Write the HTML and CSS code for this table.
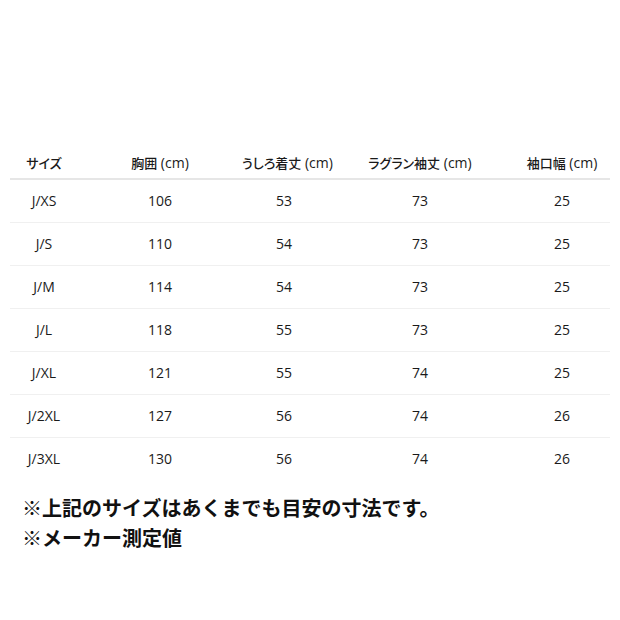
FILE: index.html
```html
<!DOCTYPE html>
<html lang="ja">
<head>
<meta charset="utf-8">
<link rel="stylesheet" href="styles.css">
</head>
<body>
<div class="page">
  <table class="size-table">
    <colgroup>
      <col class="c1"><col class="c2"><col class="c3"><col class="c4"><col class="c5">
    </colgroup>
    <thead>
      <tr>
        <th><span class="ja">サイズ</span></th>
        <th><span class="ja">胸囲</span> (cm)</th>
        <th><span class="ja">うしろ着丈</span> (cm)</th>
        <th><span class="ja">ラグラン袖丈</span> (cm)</th>
        <th><span class="ja">袖口幅</span> (cm)</th>
      </tr>
    </thead>
    <tbody>
      <tr><td>J/XS</td><td>106</td><td>53</td><td>73</td><td>25</td></tr>
      <tr><td>J/S</td><td>110</td><td>54</td><td>73</td><td>25</td></tr>
      <tr><td>J/M</td><td>114</td><td>54</td><td>73</td><td>25</td></tr>
      <tr><td>J/L</td><td>118</td><td>55</td><td>73</td><td>25</td></tr>
      <tr><td>J/XL</td><td>121</td><td>55</td><td>74</td><td>25</td></tr>
      <tr><td>J/2XL</td><td>127</td><td>56</td><td>74</td><td>26</td></tr>
      <tr><td>J/3XL</td><td>130</td><td>56</td><td>74</td><td>26</td></tr>
    </tbody>
  </table>
  <div class="notes">
    <p>※上記のサイズはあくまでも目安の寸法です。</p>
    <p>※メーカー測定値</p>
  </div>
</div>
</body>
</html>
```

FILE: styles.css
```css
html, body {
  margin: 0;
  padding: 0;
  background: #ffffff;
}
.page {
  width: 620px;
  height: 620px;
  padding: 143px 10px 0 10px;
  box-sizing: border-box;
  font-family: "Open Sans", "Noto Sans CJK JP", sans-serif;
  color: #1a1a1a;
}
.size-table {
  width: 600px;
  border-collapse: collapse;
  table-layout: fixed;
  font-size: 14px;
}
.c1 { width: 68px; }
.c2 { width: 164px; }
.c3 { width: 84px; }
.c4 { width: 188px; }
.c5 { width: 96px; }
.size-table th,
.size-table td {
  text-align: center;
  padding: 0;
  white-space: nowrap;
  line-height: 20px;
  font-weight: 500;
}
.size-table th {
  height: 31px;
  padding-top: 4px;
  border-bottom: 2px solid #e6e6e6;
  vertical-align: middle;
}
.ja {
  font-family: "Noto Sans CJK JP", sans-serif;
  font-size: 13px;
  font-feature-settings: "palt";
}
.size-table td {
  height: 42px;
  border-bottom: 1px solid #f0f0f0;
}
.size-table tbody tr:last-child td {
  border-bottom: none;
}
.notes {
  margin-top: 13px;
  padding-left: 12px;
  font-family: "Noto Sans CJK JP", sans-serif;
  font-size: 20px;
  font-weight: bold;
  color: #111111;
}
.notes p {
  margin: 0;
  line-height: 30px;
}
```
